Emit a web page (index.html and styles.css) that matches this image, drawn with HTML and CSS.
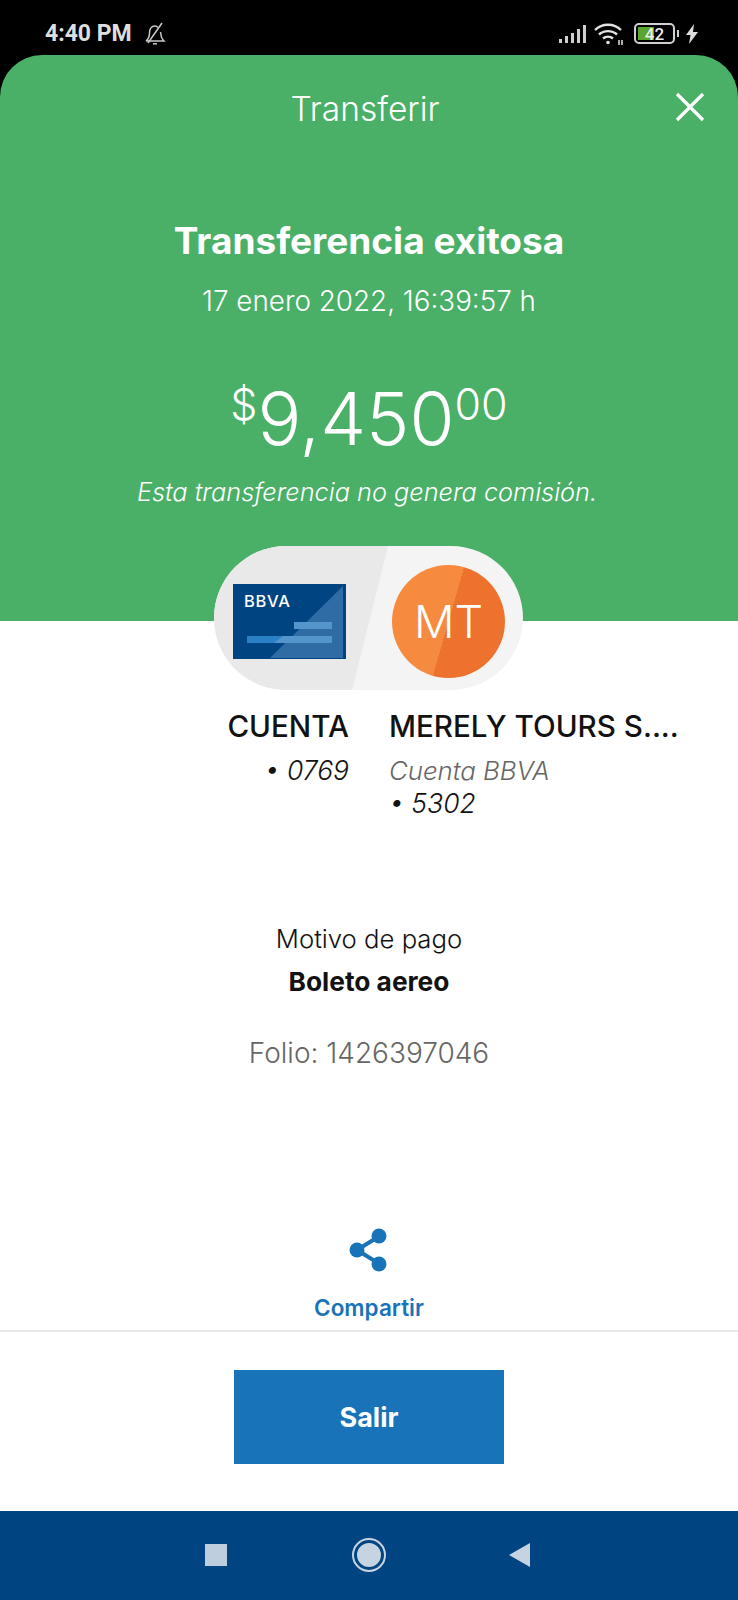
FILE: index.html
```html
<!DOCTYPE html>
<html lang="es">
<head>
<meta charset="UTF-8" />
<meta name="viewport" content="width=device-width, initial-scale=1" />
<title>Transferir</title>
<link rel="stylesheet" href="styles.css">
</head>
<body>

<div class="screen">
  <div class="statusbar">
    <div class="status-left">
      <span class="clock">4:40 PM</span>
      <svg class="bell" width="24" height="24" viewBox="0 0 24 24" fill="none" stroke="#c9c9c9" stroke-width="1.5">
        <path d="M3 19h18c-2-2-3-3-3-6 0-1-.2-2-.6-3M15 5.500C14 4.500 13 4 12 4 8.500 4 6.500 7 6.500 11c0 4-1 6-3.500 8" />
        <path d="M19 1 5 21" />
        <path d="M10 21.800h4" />
      </svg>
    </div>
    <div class="status-right">
      <svg width="28" height="20" viewBox="0 0 28 20" fill="#cfcfcf">
        <rect x="0" y="15" width="3" height="4" />
        <rect x="6" y="12" width="3" height="7" />
        <rect x="12" y="9" width="3" height="10" />
        <rect x="18" y="5" width="3" height="14" />
        <rect x="24" y="1" width="3" height="18" />
      </svg>
      <svg class="wifi" width="30" height="24" viewBox="0 0 30 24" fill="none" stroke="#e2e2e2" stroke-width="2.400">
        <path d="M1 8c7-7 19-7 26 0" />
        <path d="M5 12.500c5-4.500 13-4.500 18 0" />
        <path d="M9 16.500c3-2.500 7-2.500 10 0" />
        <circle cx="14" cy="20.500" r="1.800" fill="#e2e2e2" stroke="none" />
        <path d="M25 18v5M28 18v5" stroke-width="1.500" />
      </svg>
      <div class="battery">
        <div class="battery-box"><span class="battery-fill"></span><span class="battery-num">42</span></div>
        <span class="battery-tip"></span>
      </div>
      <svg width="12" height="20" viewBox="0 0 12 20" fill="#dcdcdc">
        <path d="M8 0 0 11h4.500L3 20l9-12H7z" />
      </svg>
    </div>
  </div>

  <div class="hero">
    <div class="hero-top">
      <span class="hero-title">Transferir</span>
      <svg class="close" width="32" height="32" viewBox="0 0 32 32" stroke="#fff" stroke-width="3.200" fill="none">
        <path d="M3 3l26 26M29 3 3 29" />
      </svg>
    </div>
    <h1>Transferencia exitosa</h1>
    <div class="date">17 enero 2022, 16:39:57 h</div>
    <div class="amount"><span class="cur">$</span>9,450<span class="cents">00</span></div>
    <div class="note">Esta transferencia no genera comisión.</div>
  </div>

  <div class="content">
    <div class="pill">
      <div class="pill-side pill-left">
        <svg class="card" width="113" height="75" viewBox="0 0 113 75">
          <rect width="113" height="75" fill="#004481" />
          <path d="M110 2v72H37z" fill="#2f6ca6" />
          <rect x="61" y="38" width="38" height="7" fill="#5495cc" />
          <rect x="14" y="52" width="85" height="7" fill="#2a80c4" />
          <path d="M50 52h49v7H41z" fill="#5495cc" />
          <text x="11" y="23" class="card-logo">BBVA</text>
        </svg>
      </div>
      <div class="pill-side pill-right">
        <div class="avatar">MT</div>
      </div>
    </div>

    <div class="parties">
      <div class="party party-from">
        <div class="party-name">CUENTA</div>
        <div class="party-sub"><i>• 0769</i></div>
      </div>
      <div class="party party-to">
        <div class="party-name">MERELY TOURS S....</div>
        <div class="party-sub"><i class="muted">Cuenta BBVA</i><i>• 5302</i></div>
      </div>
    </div>

    <div class="details">
      <div class="motivo">Motivo de pago</div>
      <div class="motivo-val">Boleto aereo</div>
      <div class="folio">Folio: 1426397046</div>
    </div>

    <div class="share">
      <svg width="40" height="44" viewBox="0 0 40 44" fill="#1973b8" stroke="#1973b8">
        <path d="M8 22 29 9M8 22l21 13" stroke-width="4" fill="none" />
        <circle cx="8" cy="22" r="7.500" stroke="none" />
        <circle cx="30" cy="8" r="7.500" stroke="none" />
        <circle cx="30" cy="36" r="7.500" stroke="none" />
      </svg>
      <span class="share-label">Compartir</span>
    </div>

    <div class="footer">
      <button class="exit" type="button">Salir</button>
    </div>
  </div>

  <div class="navbar">
    <span class="nav-square"></span>
    <span class="nav-home"></span>
    <span class="nav-back"></span>
  </div>
</div>

</body>
</html>
```

FILE: styles.css
```css
body {
  margin: 0;
  font-family: Inter, "Open Sans", Arial, sans-serif;
  background: #fff;
  color: #121212;
}
.screen {
  width: 738px;
  height: 1600px;
  display: flex;
  flex-direction: column;
  background: #000;
  overflow: hidden;
}

/* status bar */
.statusbar {
  height: 55px;
  flex: none;
  display: flex;
  justify-content: space-between;
  align-items: center;
  padding: 17px 40px 5px 45px;
  box-sizing: border-box;
  color: #dedede;
}
.status-left, .status-right {
  display: flex;
  align-items: center;
}
.clock {
  font-family: Roboto, sans-serif;
  font-weight: 700;
  font-size: 23px;
  margin-right: 11px;
}
.status-right {
  gap: 7px;
}
.wifi {
  margin-right: 3px;
}
.battery {
  display: flex;
  align-items: center;
  gap: 2px;
}
.battery-box {
  width: 41px;
  height: 21px;
  border: 2px solid #d0d0d0;
  border-radius: 5px;
  position: relative;
  display: flex;
  align-items: center;
  justify-content: center;
  box-sizing: border-box;
  padding: 1px;
}
.battery-fill {
  position: absolute;
  left: 2px;
  top: 2px;
  bottom: 2px;
  width: 16px;
  background: #58a52f;
}
.battery-num {
  position: relative;
  font-family: Roboto, sans-serif;
  font-size: 17px;
  font-weight: 500;
  color: #eee;
}
.battery-tip {
  width: 2px;
  height: 7px;
  background: #d0d0d0;
}

/* green header */
.hero {
  flex: none;
  height: 566px;
  box-sizing: border-box;
  background: #4aaf67;
  border-radius: 42px 42px 0 0;
  color: #fff;
  text-align: center;
}
.hero-top {
  height: 104px;
  position: relative;
  display: flex;
  align-items: center;
  justify-content: center;
  padding: 4px 8px 0 0;
  box-sizing: border-box;
}
.hero-title {
  font-size: 33.500px;
  font-weight: 300;
}
.close {
  position: absolute;
  right: 32px;
  top: 36px;
}
h1 {
  margin: 60px 0 0;
  font-size: 37px;
  line-height: 44px;
  font-weight: 700;
}
.date {
  margin-top: 20px;
  font-size: 27.800px;
  line-height: 36px;
  font-weight: 300;
}
.amount {
  margin-top: 59px;
  font-size: 73px;
  line-height: 82px;
  font-weight: 300;
}
.cur, .cents {
  font-size: 43px;
  vertical-align: 25px;
  line-height: 0;
}
.note {
  margin-top: 14px;
  padding-right: 4px;
  font-size: 25.300px;
  line-height: 36px;
  font-weight: 300;
  font-style: italic;
}

/* white part below the header */
.content {
  flex: 1;
  display: flex;
  flex-direction: column;
  background: #fff;
}

/* account pill */
.pill {
  flex: none;
  align-self: flex-start;
  width: 309px;
  height: 144px;
  margin: -75px 0 0 214px;
  padding-top: 7px;
  box-sizing: border-box;
  border-radius: 72px;
  overflow: hidden;
  position: relative;
  background: #f4f4f4;
  display: flex;
  align-items: center;
}
.pill::before {
  content: "";
  position: absolute;
  inset: 0;
  background: #e9e9e9;
  clip-path: polygon(0 0, 174px 0, 138px 100%, 0 100%);
}
.pill-side {
  position: relative;
  display: flex;
}
.pill-left {
  margin-left: 19px;
}
.pill-right {
  margin-left: 46px;
}
.card {
  display: block;
}
.card-logo {
  font-family: Inter, sans-serif;
  font-size: 16.500px;
  font-weight: 500;
  letter-spacing: 0.7px;
  fill: #fff;
}
.avatar {
  width: 113px;
  height: 113px;
  border-radius: 50%;
  background: linear-gradient(106deg, #f68b3f 0 50%, #ec722d 50%);
  color: #fff;
  font-size: 45px;
  font-weight: 300;
  display: flex;
  align-items: center;
  justify-content: center;
}

/* from / to */
.parties {
  display: flex;
  height: 132px;
  padding-top: 15px;
}
.party-from {
  width: 349px;
  text-align: right;
}
.party-to {
  margin-left: 40px;
}
.party-name {
  font-size: 29.600px;
  line-height: 42px;
  font-weight: 500;
  white-space: nowrap;
}
.party-sub {
  margin-top: 7px;
  font-size: 26.500px;
  line-height: 33px;
  font-weight: 300;
}
.party-sub i {
  display: block;
}
.muted {
  color: #666;
  font-size: 25.800px;
}

/* motivo / folio */
.details {
  flex: none;
  margin-top: 84px;
  text-align: center;
}
.motivo {
  font-size: 25.700px;
  line-height: 36px;
  font-weight: 300;
}
.motivo-val {
  margin-top: 7px;
  font-size: 26.300px;
  line-height: 36px;
  font-weight: 700;
}
.folio {
  margin-top: 35px;
  font-size: 28px;
  line-height: 36px;
  font-weight: 300;
  color: #666;
}

/* share */
.share {
  flex: none;
  margin-top: 157px;
  display: flex;
  flex-direction: column;
  align-items: center;
}
.share-label {
  margin-top: 21px;
  font-size: 22.500px;
  line-height: 30px;
  font-weight: 600;
  color: #1973b8;
}

/* footer */
.footer {
  flex: 1;
  border-top: 2px solid #e9e9e9;
  margin-top: 7px;
  display: flex;
  justify-content: center;
  padding-top: 38px;
  box-sizing: border-box;
}
.exit {
  width: 270px;
  height: 94px;
  border: none;
  background: #1973b8;
  color: #fff;
  font-family: inherit;
  font-size: 27px;
  font-weight: 700;
}

/* android nav */
.navbar {
  flex: none;
  height: 89px;
  background: #004481;
  position: relative;
}
.nav-square, .nav-home, .nav-back {
  position: absolute;
}
.nav-square {
  left: 205px;
  top: 33px;
  width: 22px;
  height: 22px;
  background: #bfcede;
}
.nav-home {
  left: 354px;
  top: 29px;
  width: 24px;
  height: 24px;
  border-radius: 50%;
  background: #c6d3e1;
  border: 3px solid #004481;
  outline: 2.500px solid #c6d3e1;
}
.nav-back {
  left: 509px;
  top: 32px;
  width: 21px;
  height: 24px;
  background: #c6d3e1;
  clip-path: polygon(100% 0, 100% 100%, 0 50%);
}
```
